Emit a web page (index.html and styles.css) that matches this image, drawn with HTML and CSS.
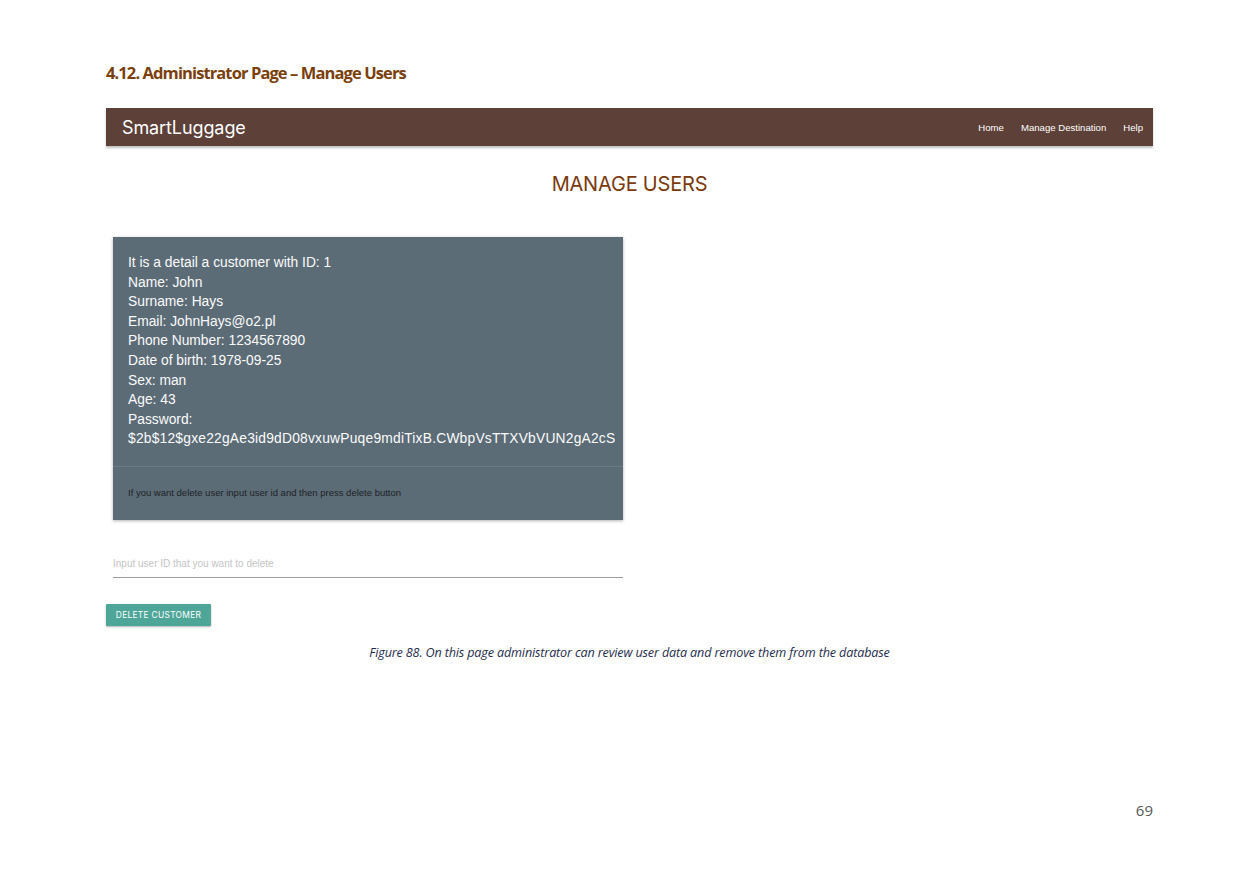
FILE: index.html
```html
<!DOCTYPE html>
<html>
<head>
<meta charset="utf-8">
<link rel="stylesheet" href="styles.css">
</head>
<body>
<div class="page">
  <h2 class="doc-heading">4.12. Administrator Page – Manage Users</h2>
  <div class="shot">
    <nav class="navbar">
      <div class="brand">SmartLuggage</div>
      <ul class="nav-links">
        <li>Home</li>
        <li>Manage Destination</li>
        <li>Help</li>
      </ul>
    </nav>
    <h1 class="title">MANAGE USERS</h1>
    <div class="card">
      <div class="card-content">
        <p>It is a detail a customer with ID: 1</p>
        <p>Name: John</p>
        <p>Surname: Hays</p>
        <p>Email: JohnHays@o2.pl</p>
        <p>Phone Number: 1234567890</p>
        <p>Date of birth: 1978-09-25</p>
        <p>Sex: man</p>
        <p>Age: 43</p>
        <p>Password:</p>
        <p class="hash">$2b$12$gxe22gAe3id9dD08vxuwPuqe9mdiTixB.CWbpVsTTXVbVUN2gA2cS</p>
      </div>
      <div class="card-action">If you want delete user input user id and then press delete button</div>
    </div>
    <div class="field">
      <input class="input" type="text" placeholder="Input user ID that you want to delete">
    </div>
    <button class="btn">DELETE CUSTOMER</button>
  </div>
  <p class="caption">Figure 88. On this page administrator can review user data and remove them from the database</p>
  <div class="page-num">69</div>
</div>
</body>
</html>
```
FILE: styles.css
```css
* { box-sizing: border-box; }
html, body { margin: 0; padding: 0; background: #fff; }
body { font-family: "Liberation Sans", Arial, sans-serif; }
.page {
  width: 1260px;
  height: 869px;
  padding: 62px 107px 0 106px;
  display: flex;
  flex-direction: column;
}
.doc-heading {
  margin: 0;
  font-family: "Open Sans", sans-serif;
  font-weight: 700;
  font-size: 16.5px;
  letter-spacing: -0.9px;
  color: #7b3f0c;
  line-height: 22px;
}
.shot { margin-top: 24px; display: flex; flex-direction: column; }
.navbar {
  height: 38px;
  background: #5d4037;
  display: flex;
  align-items: center;
  justify-content: space-between;
  padding: 0 10px 0 16px;
  box-shadow: 0 2px 2px rgba(0,0,0,0.25);
  font-family: Inter, sans-serif;
}
.brand { color: #fff; font-size: 18px; letter-spacing: -0.1px; }
.nav-links { list-style: none; margin: 0; padding: 0; display: flex; gap: 17px; font-family: "Liberation Sans", Arial, sans-serif; }
.nav-links li { color: #fff; font-size: 9.6px; }
.title {
  margin: 26px 0 0;
  text-align: center;
  font-family: Inter, sans-serif;
  font-weight: 400;
  font-size: 20px;
  color: #7a3a0e;
  line-height: 24px;
  letter-spacing: -0.2px;
}
.card {
  margin: 41px 0 0 7px;
  width: 510px;
  background: #5b6c77;
  box-shadow: 0 1px 3px rgba(0,0,0,0.3);
  font-family: "Liberation Sans", Arial, sans-serif;
}
.card-content { padding: 16px 15px 17px; color: #fbfbfb; }
.card-content p { margin: 0; font-size: 13.8px; line-height: 19.6px; letter-spacing: 0; white-space: nowrap; }
.card-content p.hash { letter-spacing: 0.22px; }
.card-action {
  border-top: 1px solid rgba(160,160,160,0.25);
  padding: 20px 15px 21px;
  font-size: 9.5px;
  color: #1e2226;
  line-height: 12px;
}
.field { margin: 33px 0 0 7px; width: 510px; }
.input {
  width: 100%;
  border: none;
  border-bottom: 1px solid #9e9e9e;
  padding: 0 0 8px;
  font-family: "Liberation Sans", Arial, sans-serif;
  font-size: 10px;
  outline: none;
  background: transparent;
}
.input::placeholder { color: #c4c4c4; }
.btn {
  margin-top: 26px;
  align-self: flex-start;
  width: 105px;
  height: 22px;
  border: none;
  background: #4ea699;
  color: #fff;
  font-family: Inter, sans-serif;
  font-size: 8.4px;
  letter-spacing: 0.3px;
  border-radius: 1px;
  box-shadow: 0 1px 2px rgba(0,0,0,0.3);
  padding: 0;
}
.caption {
  margin: 19px 0 0;
  text-align: center;
  font-family: "Open Sans", sans-serif;
  font-style: italic;
  font-size: 12.6px;
  color: #1f2e4e;
  letter-spacing: -0.15px;
  line-height: 16px;
}
.page-num {
  margin-top: 139px;
  align-self: flex-end;
  font-family: "Open Sans", sans-serif;
  font-size: 15px;
  color: #595959;
}
```
